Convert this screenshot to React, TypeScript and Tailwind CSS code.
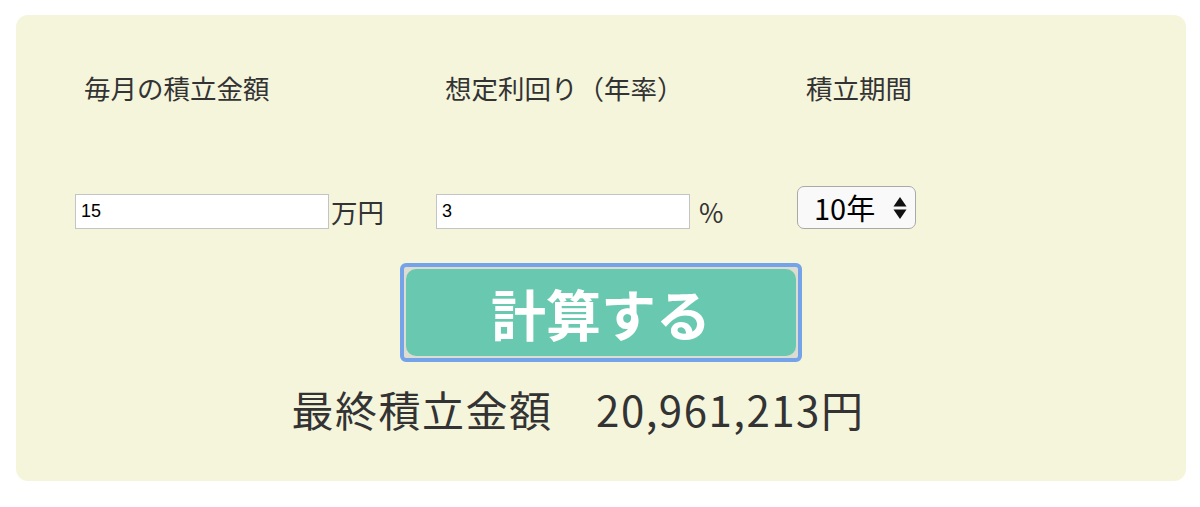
import React, { useState } from "react";

const font = { fontFamily: '"Noto Sans CJK JP", "Noto Sans", sans-serif' };

const App: React.FC = () => {
  const [monthly, setMonthly] = useState("15");
  const [rate, setRate] = useState("3");
  const [years, setYears] = useState("10");

  return (
    <div className="min-h-screen bg-white pt-[15px] pl-[16px]" style={font}>
      <div className="w-[1170px] h-[466px] rounded-[12px] bg-[#f5f5dc] pl-[59px] pt-[57px] text-[#333]">
        {/* labels */}
        <div className="grid grid-cols-[361px_361px_361px]">
          <div className="pl-[9px] text-[26.5px] leading-[32px]">毎月の積立金額</div>
          <div className="pl-[9px] text-[26.5px] leading-[32px]">想定利回り（年率）</div>
          <div className="pl-[9px] text-[26.5px] leading-[32px]">積立期間</div>
        </div>

        {/* inputs */}
        <div className="grid grid-cols-[361px_361px_361px] items-end mt-[82px]">
          <div className="flex items-center">
            <input
              value={monthly}
              onChange={(e) => setMonthly(e.target.value)}
              className="w-[254px] h-[35px] border border-[#c4c4c4] bg-white px-[5px] text-[18px] text-black outline-none"
              style={{ fontFamily: '"Liberation Sans", Arial, sans-serif' }}
            />
            <span className="ml-[2px] text-[26.5px] leading-[32px]">万円</span>
          </div>
          <div className="flex items-center">
            <input
              value={rate}
              onChange={(e) => setRate(e.target.value)}
              className="w-[254px] h-[35px] border border-[#c4c4c4] bg-white px-[5px] text-[18px] text-black outline-none"
              style={{ fontFamily: '"Liberation Sans", Arial, sans-serif' }}
            />
            <span className="ml-[9px] text-[26.5px] leading-[32px]">%</span>
          </div>
          <div className="relative w-[119px] h-[43px]">
            <select
              value={years}
              onChange={(e) => setYears(e.target.value)}
              className="appearance-none w-full h-full rounded-[7px] border border-[#a9a9a9] bg-[#f9f9f9] pl-[16px] text-[29px] leading-[41px] text-black outline-none"
            >
              {[5, 10, 15, 20, 25, 30].map((y) => (
                <option key={y} value={String(y)}>
                  {y}年
                </option>
              ))}
            </select>
            <svg
              className="pointer-events-none absolute right-[9px] top-[10px]"
              width="14"
              height="24"
              viewBox="0 0 14 24"
            >
              <path d="M7 1 L13.5 10.5 H0.5 Z" fill="#111" />
              <path d="M7 23 L13.5 13.5 H0.5 Z" fill="#111" />
            </svg>
          </div>
        </div>

        {/* button */}
        <div className="flex justify-center mt-[34px] pr-[59px]">
          <button
            type="button"
            className="w-[402px] h-[99px] rounded-[6px] border-[4px] border-[#74a3ea] bg-[#dcdcd0] p-[2px]"
          >
            <div className="w-full h-full rounded-[10px] bg-[#68c9b0] flex items-center justify-center text-white font-bold text-[55px] leading-none">
              計算する
            </div>
          </button>
        </div>

        {/* result */}
        <div className="flex justify-center mt-[22px] pr-[105px]">
          <div className="text-[42px] leading-[50px] tracking-[1.5px] text-[#333]">最終積立金額　20,961,213円</div>
        </div>
      </div>
    </div>
  );
};

export default App;
